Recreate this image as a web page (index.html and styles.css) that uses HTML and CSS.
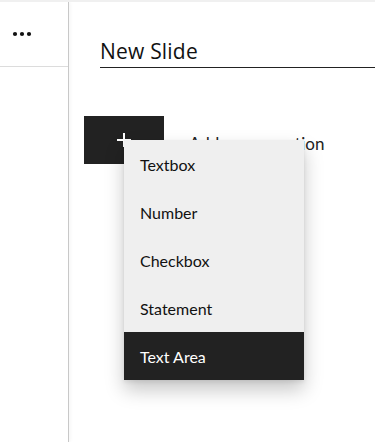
FILE: index.html
```html
<!DOCTYPE html>
<html lang="en">
<head>
<meta charset="utf-8">
<title>New Slide</title>
<link rel="stylesheet" href="styles.css">
</head>
<body>
<div class="app">
  <aside class="sidebar">
    <div class="sidebar-top">
      <svg class="dots" width="20" height="6" viewBox="0 0 20 6" aria-label="More">
        <circle cx="3" cy="3" r="2.1" fill="#111"/>
        <circle cx="10" cy="3" r="2.1" fill="#111"/>
        <circle cx="17" cy="3" r="2.1" fill="#111"/>
      </svg>
    </div>
  </aside>
  <main class="main">
    <div class="title-wrap">
      <h1 class="title">New Slide</h1>
    </div>
    <div class="add-row">
      <div class="add-wrap">
        <button class="add-btn" type="button" aria-label="Add">
          <svg width="14" height="14" viewBox="0 0 14 14"><path d="M7 0v14M0 7h14" stroke="#fff" stroke-width="2"/></svg>
        </button>
        <ul class="menu">
          <li class="menu-item">Textbox</li>
          <li class="menu-item">Number</li>
          <li class="menu-item">Checkbox</li>
          <li class="menu-item">Statement</li>
          <li class="menu-item is-active">Text Area</li>
        </ul>
      </div>
      <span class="add-label">Add new question</span>
    </div>
  </main>
</div>
</body>
</html>
```
FILE: styles.css
```css
* { box-sizing: border-box; }
html, body { margin: 0; padding: 0; background: #fff; }
body { font-family: Lato, "Open Sans", sans-serif; color: #222; }

.app {
  display: flex;
  height: 442px;
  border-top: 2px solid #f0f0f0;
  overflow: hidden;
}

.sidebar {
  width: 69px;
  flex: none;
  border-right: 1px solid #c8c8c8;
  box-shadow: 2px 0 3px rgba(0,0,0,0.03);
}
.sidebar-top {
  height: 65px;
  border-bottom: 1px solid #dcdcdc;
  display: flex;
  align-items: center;
  padding-left: 12px;
}
.dots { display: block; margin-top: 0; }

.main {
  flex: 1;
  min-width: 0;
  padding-top: 33px;
}

.title-wrap {
  margin-left: 31px;
  border-bottom: 1px solid #222;
  height: 33px;
}
.title {
  margin: 0;
  font-family: "Open Sans", sans-serif;
  font-weight: 400;
  font-size: 21px;
  line-height: 32px;
  color: #111;
  letter-spacing: 0.2px;
}

.add-row {
  margin-top: 48px;
  margin-left: 15px;
  display: flex;
  align-items: center;
  gap: 25px;
}
.add-wrap { position: relative; }
.add-btn {
  width: 80px;
  height: 48px;
  border: 0;
  margin: 0;
  padding: 0;
  background: #222;
  display: flex;
  align-items: center;
  justify-content: center;
}
.add-btn svg { display: block; }
.add-label {
  font-size: 17px;
  color: #222;
  margin-top: 6px;
}

.menu {
  position: absolute;
  left: 40px;
  top: 24px;
  width: 180px;
  margin: 0;
  padding: 0;
  list-style: none;
  background: #efefef;
  box-shadow: 0 10px 18px rgba(0,0,0,0.22), 0 2px 4px rgba(0,0,0,0.08);
  z-index: 2;
}
.menu-item {
  height: 48px;
  display: flex;
  align-items: center;
  padding-left: 16px;
  font-size: 16px;
  color: #111;
}
.menu-item.is-active {
  background: #222;
  color: #fff;
}
```
